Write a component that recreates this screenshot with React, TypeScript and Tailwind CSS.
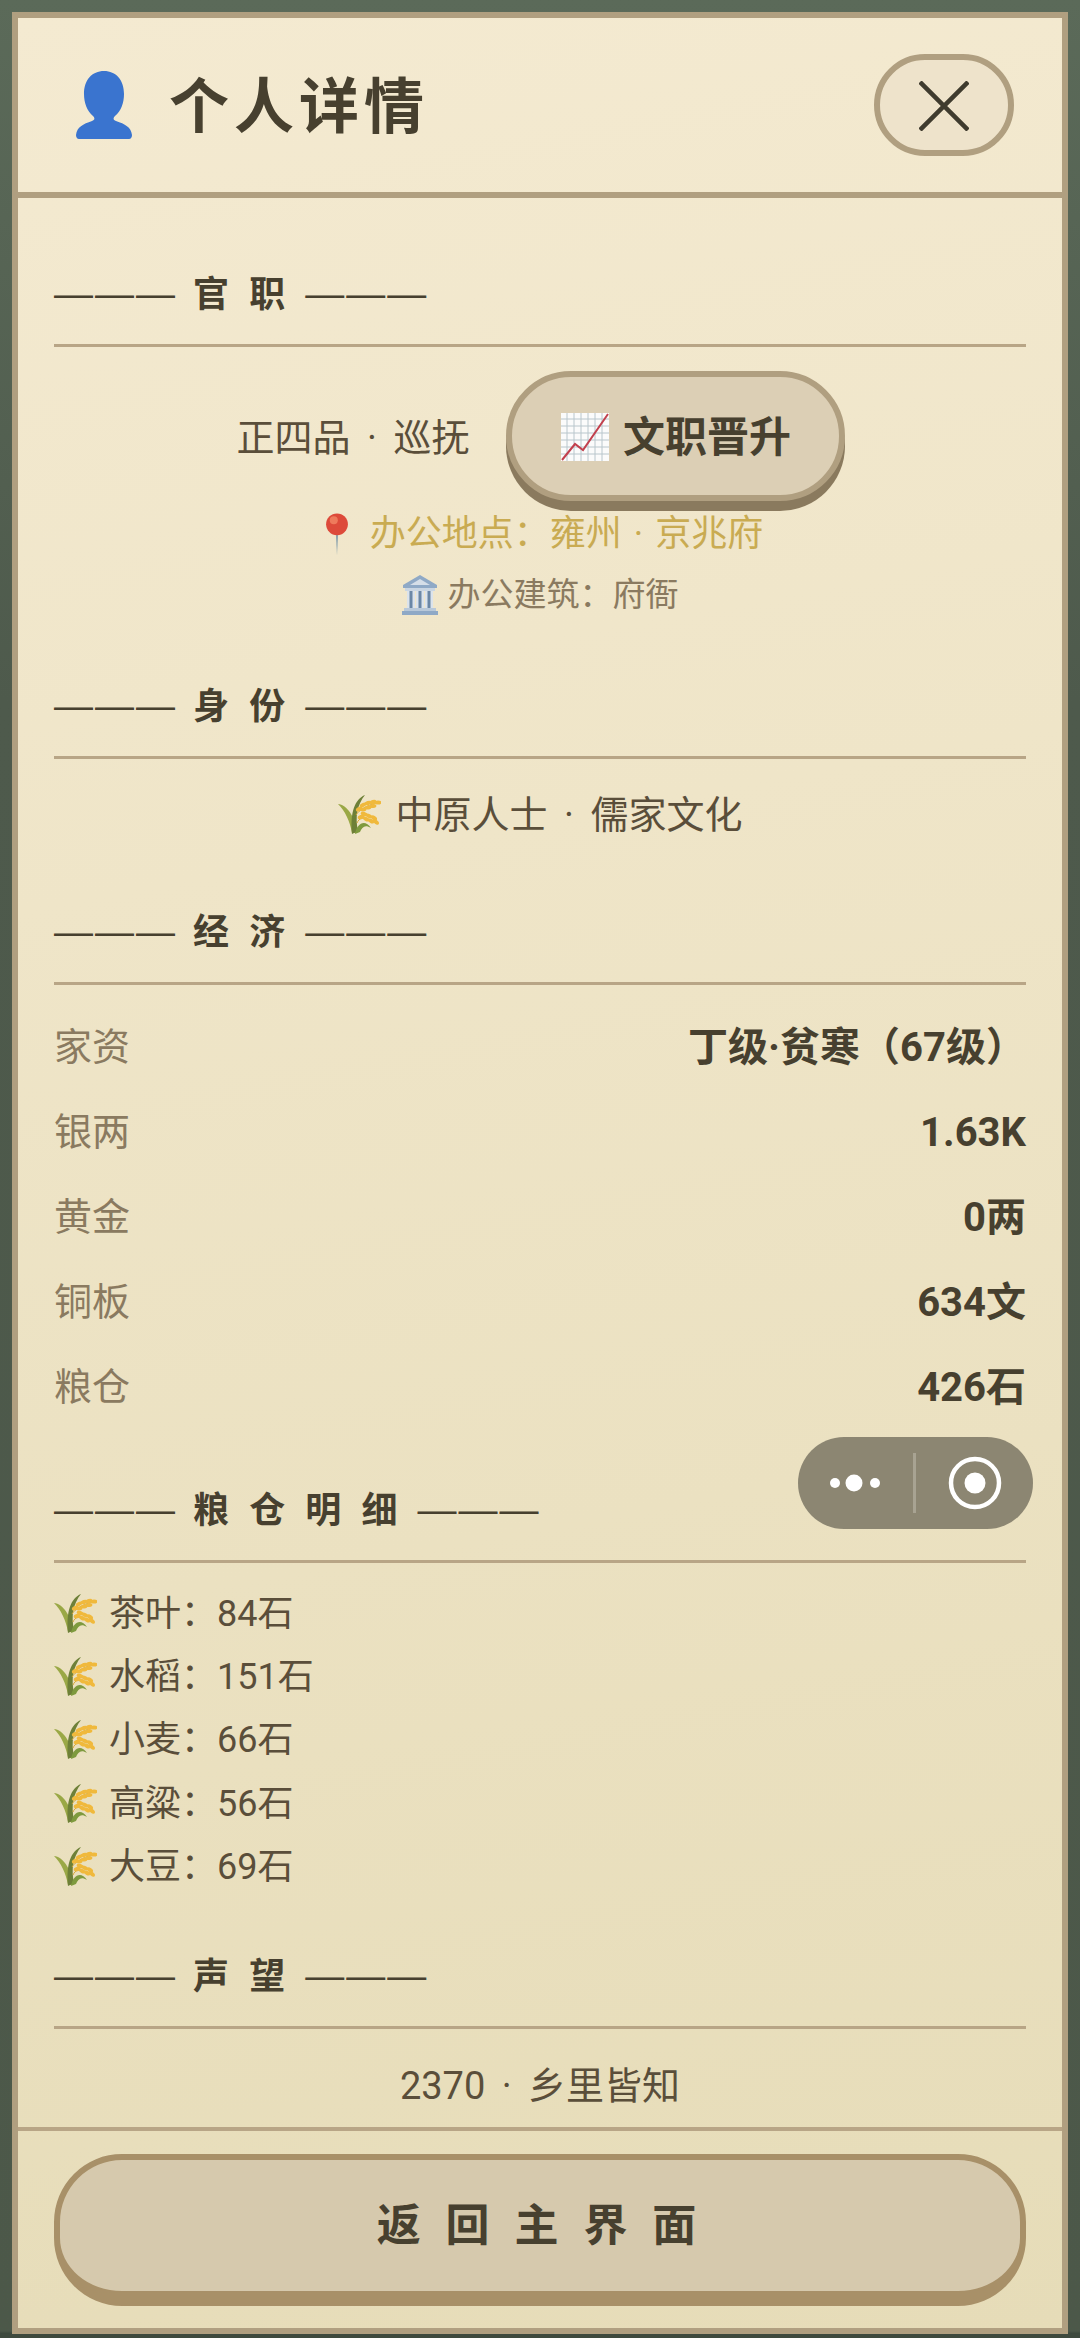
import type { ReactNode } from 'react'

function PersonIcon({ className }: { className: string }) {
  return (
    <svg viewBox="0 0 58 68" className={className}>
      <path
        d="M29 0c12 0 20 9 20 23 0 9-3 17-9 22-2 2-2 4 1 5 9 3 15 6 16 14 0 2-1 4-3 4H4c-2 0-3-2-3-4 1-8 7-11 16-14 3-1 3-3 1-5-6-5-9-13-9-22C9 9 17 0 29 0z"
        fill="#3a74cf"
      />
    </svg>
  )
}

function ChartIcon({ className }: { className: string }) {
  const lines = [6, 13, 20, 27, 34, 41]
  return (
    <svg viewBox="0 0 48 48" className={className}>
      <rect x="0" y="0" width="48" height="48" fill="#fbfbfb" />
      {lines.map((v) => (
        <path key={`v${v}`} d={`M${v} 0V48`} stroke="#b9c6cc" strokeWidth="1" />
      ))}
      {lines.map((v) => (
        <path key={`h${v}`} d={`M0 ${v}H48`} stroke="#b9c6cc" strokeWidth="1" />
      ))}
      <path d="M1 47L14 31l8 6L47 1" fill="none" stroke="#c2404d" strokeWidth="2" />
    </svg>
  )
}

function PinIcon({ className }: { className: string }) {
  return (
    <svg viewBox="0 0 28 52" className={className}>
      <path d="M12.6 26h2.8L14 52z" fill="#8ba3ae" />
      <circle cx="14" cy="14" r="13.5" fill="#dd4a3a" />
      <circle cx="10" cy="9" r="5" fill="#ee7a5c" />
    </svg>
  )
}

function BuildingIcon({ className }: { className: string }) {
  return (
    <svg viewBox="0 0 36 40" className={className}>
      <path d="M18 0L35 10v3H1v-3z" fill="#8fa9c6" />
      <path d="M18 4l10 6H8z" fill="#d5dee8" />
      <rect x="3" y="13" width="30" height="3" fill="#c9d5e2" />
      {[5, 14, 23].map((x) => (
        <g key={x}>
          <rect x={x} y="16" width="8" height="17" fill="#dbe3ec" />
          <rect x={x + 2.5} y="16" width="3" height="17" fill="#6b87a6" />
        </g>
      ))}
      <rect x="2" y="33" width="32" height="3" fill="#b8c8d9" />
      <rect x="0" y="36" width="36" height="4" fill="#8fa9c6" />
    </svg>
  )
}

function RiceIcon({ className }: { className: string }) {
  const top = [
    [29, 24, -30], [33, 20, -25], [33, 24.5, -5], [38, 18, -20], [38, 22.5, -10],
    [43, 17, -15], [43, 21, -10], [48, 17.5, 0],
  ]
  const low = [
    [31, 32, -20], [34, 29, 20], [36, 34, 30], [39, 31, 25], [41, 36, 30], [44, 33, 35], [46, 37, 40],
  ]
  return (
    <svg viewBox="8 10 43 40" className={className}>
      <path d="M8 19C17 20 25 31 27 48l-5 0C20 36 15 26 8 19z" fill="#9aa846" />
      <path d="M35 10C25 14 20 27 22 49l6-3C25 32 27 20 35 10z" fill="#6e8038" />
      <path d="M25 49C27 38 35 34 41 43 35 39 32 42 30 47z" fill="#7e9a3e" />
      <path d="M26 30C29 25 36 21 48 17M27 38C29 33 33 31 46 37" fill="none" stroke="#d8a93a" strokeWidth="1" />
      <g fill="#f0b93c">
        {[...top, ...low].map(([x, y, r]) => (
          <ellipse key={`${x}-${y}`} cx={x} cy={y} rx="3.4" ry="2" transform={`rotate(${r} ${x} ${y})`} />
        ))}
      </g>
    </svg>
  )
}

function Dashes() {
  return <span className="font-['Liberation_Sans',sans-serif] text-[39px] font-normal tracking-[2px]">———</span>
}

function SectionTitle({ children, className = '' }: { children: ReactNode; className?: string }) {
  return (
    <div className={`h-[79px] border-b-[3px] border-[#b8a586] pb-[29px] text-[36px] leading-[47px] font-bold whitespace-pre text-[#47402f] ${className}`}>
      <Dashes />
      <span className="mr-[14px] ml-[16px] font-['Noto_Sans_CJK_SC',sans-serif] tracking-[6px]">{children}</span>
      <Dashes />
    </div>
  )
}

function Dot() {
  return <span className="mx-[7px]"> · </span>
}

function MoneyRow({ label, value }: { label: string; value: string }) {
  return (
    <div className="flex h-[85px] items-center justify-between">
      <span className="text-[38px] text-[#8a7a60]">{label}</span>
      <span className="text-[40px] font-bold text-[#47402f]">{value}</span>
    </div>
  )
}

const grain = [
  ['茶叶', '84石'],
  ['水稻', '151石'],
  ['小麦', '66石'],
  ['高粱', '56石'],
  ['大豆', '69石'],
]

export default function App() {
  return (
    <div className="relative h-[2338px] w-[1080px] bg-[linear-gradient(180deg,#5b6a59_0%,#4e5a4c_30%,#4c5849_99.7%,#3e4a3e_99.8%)] pt-3 pr-3 pb-1 pl-3 font-['Roboto','Noto_Sans_CJK_SC',sans-serif]">
      <div className="flex h-full flex-col border-[6px] border-[#b09f80] bg-[linear-gradient(170deg,#f4ead1,#e6dcb8)]">
        <header className="flex h-[180px] shrink-0 items-center justify-between border-b-[6px] border-[#b09f80] pr-[48px] pl-[57px]">
          <div className="flex items-center gap-[36px]">
            <PersonIcon className="h-[68px] w-[58px]" />
            <h1 className="pt-[5px] text-[60px] leading-none font-bold tracking-[5px] text-[#47402f]">个人详情</h1>
          </div>
          <button className="flex h-[102px] w-[140px] items-center justify-center rounded-[51px] border-[6px] border-[#b09f80] bg-[#eee3cb] pt-[2px]">
            <svg viewBox="0 0 50 50" className="h-[50px] w-[50px]">
              <path d="M1 1L49 49M49 1L1 49" stroke="#3f3b2e" strokeWidth="4.5" />
            </svg>
          </button>
        </header>

        <main className="min-h-0 flex-1 overflow-hidden px-[36px] pt-[70px]">
          <SectionTitle>官 职</SectionTitle>
          <div className="mt-[24px] flex items-center justify-center gap-[37px] pl-[2px]">
            <span className="pt-[5px] text-[38px] text-[#5a4e3a]">正四品<Dot />巡抚</span>
            <button className="flex h-[130px] w-[339px] items-center justify-center gap-[14px] rounded-[65px] border-[6px] border-[#b09f80] bg-[#dccfb5] pt-[2px] shadow-[0_10px_0_#8a7a5e]">
              <ChartIcon className="h-[48px] w-[48px]" />
              <span className="text-[42px] font-bold text-[#47402f]">文职晋升</span>
            </button>
          </div>
          <div className="mt-[7px] flex h-[52px] items-center justify-center gap-[21px] pl-[8px] text-[36px] text-[#c9ab52]">
            <PinIcon className="h-[42px] w-[24px]" />
            <span>{'办公地点\uFF1A雍州'}<span className="mx-[3px]"> · </span>京兆府</span>
          </div>
          <div className="mt-[11px] flex h-[48px] items-center justify-center gap-[10px] text-[33px] text-[#8a7a60]">
            <BuildingIcon className="h-[40px] w-[36px]" />
            <span>{'办公建筑\uFF1A府衙'}</span>
          </div>

          <SectionTitle className="mt-[61px]">身 份</SectionTitle>
          <div className="mt-[28px] flex h-[56px] items-center justify-center gap-[15px] text-[38px] text-[#5a4e3a]">
            <RiceIcon className="h-[40px] w-[43px]" />
            <span>中原人士<Dot />儒家文化</span>
          </div>

          <SectionTitle className="mt-[63px]">经 济</SectionTitle>
          <div className="mt-[20px]">
            <MoneyRow label="家资" value={'丁级·贫寒\uFF0867级\uFF09'} />
            <MoneyRow label="银两" value="1.63K" />
            <MoneyRow label="黄金" value="0两" />
            <MoneyRow label="铜板" value="634文" />
            <MoneyRow label="粮仓" value="426石" />
          </div>

          <SectionTitle className="mt-[54px]">粮 仓 明 细</SectionTitle>
          <ul className="mt-[19px]">
            {grain.map(([name, amount]) => (
              <li key={name} className="flex h-[63.3px] items-center gap-[12px] text-[36px] text-[#5a4e3a]">
                <RiceIcon className="h-[40px] w-[43px]" />
                <span>{name}{'\uFF1A'}{amount}</span>
              </li>
            ))}
          </ul>

          <SectionTitle className="mt-[52px]">声 望</SectionTitle>
          <div className="mt-[29px] h-[56px] text-center text-[38px] leading-[56px] text-[#5a4e3a]">2370<Dot />乡里皆知</div>
        </main>

        <footer className="h-[201px] shrink-0 border-t-[4px] border-[#b8a586] px-[36px] pt-[23px]">
          <button className="h-[152px] w-full rounded-[68px] border-x-[6px] border-t-[6px] border-b-[15px] border-[#a89068] bg-[#d6c9ad] text-[44px] font-bold tracking-[7px] whitespace-pre text-[#47402f]">
            返 回 主 界 面
          </button>
        </footer>
      </div>

      {/* floating mini-program capsule */}
      <div className="absolute top-[1437px] left-[798px] flex h-[92px] w-[235px] items-center rounded-[46px] bg-[#8c8672]">
        <svg viewBox="0 0 235 92" className="h-[92px] w-[235px]">
          <circle cx="37" cy="46" r="5" fill="#fff" />
          <circle cx="56" cy="46" r="8.5" fill="#fff" />
          <circle cx="77" cy="46" r="5" fill="#fff" />
          <rect x="115" y="16" width="3" height="60" fill="#a8a392" />
          <circle cx="177" cy="46" r="24" fill="none" stroke="#fff" strokeWidth="4.5" />
          <circle cx="177" cy="46" r="10.5" fill="#fff" />
        </svg>
      </div>
    </div>
  )
}
